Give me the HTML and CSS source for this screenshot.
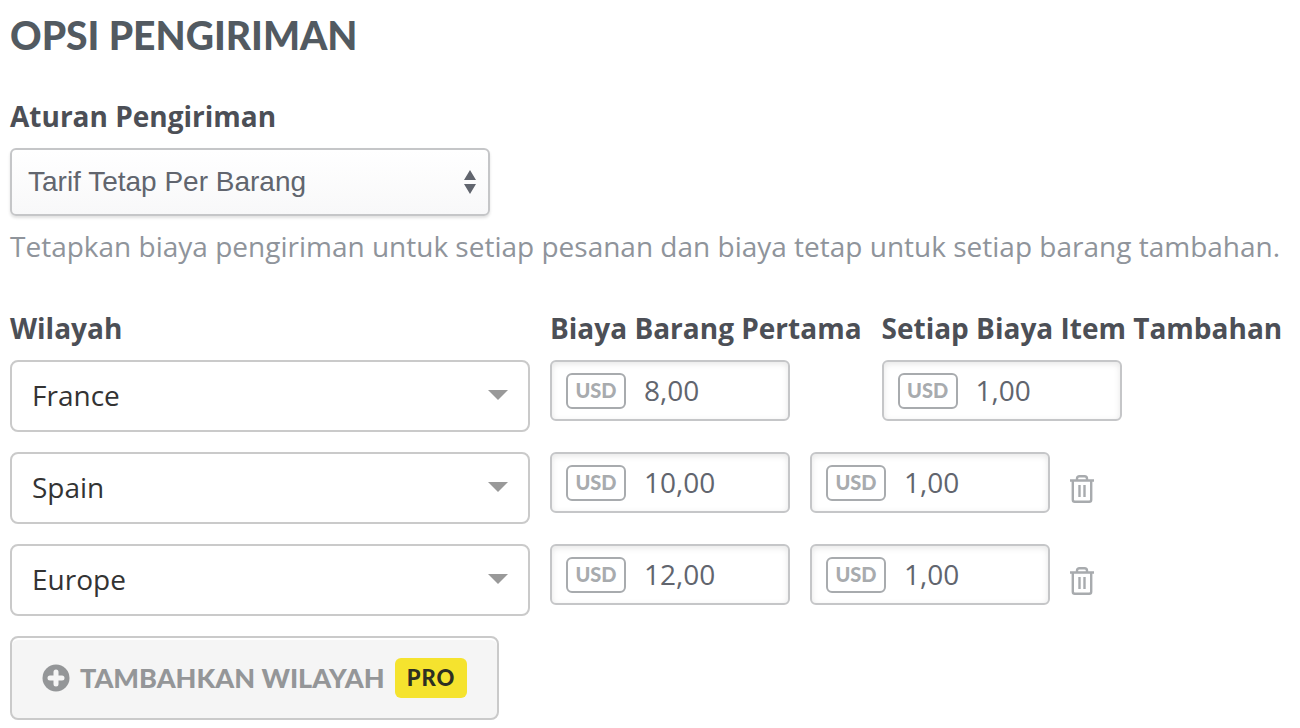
FILE: index.html
```html
<!DOCTYPE html>
<html lang="id">
<head>
	<meta charset="UTF-8">
	<title>Opsi Pengiriman</title>
	<link rel="stylesheet" href="styles.css">
</head>
<body>
<main>
	<h1>OPSI PENGIRIMAN</h1>

	<form class="shipping">
		<div class="rule">
			<label for="rule">Aturan Pengiriman</label>
			<div class="rule-select">
				<select id="rule">
					<option>Tarif Tetap Per Barang</option>
				</select>
				<svg class="updown" viewBox="0 0 12 24" aria-hidden="true"><path d="M6 0l6 10H0zM6 24l6-10H0z"/></svg>
			</div>
			<p class="hint">Tetapkan biaya pengiriman untuk setiap pesanan dan biaya tetap untuk setiap barang tambahan.</p>
		</div>

		<div class="regions">
			<!-- the first region carries the labels and can't be deleted -->
			<div class="region">
				<div class="place">
					<label for="region1">Wilayah</label>
					<div class="region-select">
						<select id="region1"><option>France</option></select>
						<svg class="arrow" viewBox="0 0 20 10" aria-hidden="true"><path d="M0 0h20L10 10z"/></svg>
					</div>
				</div>
				<div class="cost">
					<label for="first1">Biaya Barang Pertama</label>
					<div class="money"><span class="currency">USD</span><input type="text" id="first1" value="8,00"></div>
				</div>
				<div class="cost">
					<label for="extra1">Setiap Biaya Item Tambahan</label>
					<div class="money"><span class="currency">USD</span><input type="text" id="extra1" value="1,00"></div>
				</div>
			</div>

			<div class="region">
				<div class="place">
					<div class="region-select">
						<select aria-label="Wilayah"><option>Spain</option></select>
						<svg class="arrow" viewBox="0 0 20 10" aria-hidden="true"><path d="M0 0h20L10 10z"/></svg>
					</div>
				</div>
				<div class="money"><span class="currency">USD</span><input type="text" aria-label="Biaya Barang Pertama" value="10,00"></div>
				<div class="money"><span class="currency">USD</span><input type="text" aria-label="Setiap Biaya Item Tambahan" value="1,00"></div>
				<button type="button" class="delete" aria-label="Hapus">
					<svg viewBox="0 0 24 28" aria-hidden="true"><path d="M0 5.500h24M7 5V3.500Q7 1.200 9.500 1.200h5Q17 1.200 17 3.500V5M2.800 6v18.800q0 2 2 2h14.400q2 0 2-2V6M9.500 10v12M14.500 10v12"/></svg>
				</button>
			</div>

			<div class="region">
				<div class="place">
					<div class="region-select">
						<select aria-label="Wilayah"><option>Europe</option></select>
						<svg class="arrow" viewBox="0 0 20 10" aria-hidden="true"><path d="M0 0h20L10 10z"/></svg>
					</div>
				</div>
				<div class="money"><span class="currency">USD</span><input type="text" aria-label="Biaya Barang Pertama" value="12,00"></div>
				<div class="money"><span class="currency">USD</span><input type="text" aria-label="Setiap Biaya Item Tambahan" value="1,00"></div>
				<button type="button" class="delete" aria-label="Hapus">
					<svg viewBox="0 0 24 28" aria-hidden="true"><path d="M0 5.500h24M7 5V3.500Q7 1.200 9.500 1.200h5Q17 1.200 17 3.500V5M2.800 6v18.800q0 2 2 2h14.400q2 0 2-2V6M9.500 10v12M14.500 10v12"/></svg>
				</button>
			</div>
		</div>

		<button type="button" class="add">
			<svg class="plus" viewBox="0 0 28 28" aria-hidden="true"><circle cx="14" cy="14" r="13.500"/><path d="M14 8v12M8 14h12"/></svg>
			<span>TAMBAHKAN WILAYAH</span>
			<span class="pro">PRO</span>
		</button>
	</form>
</main>
</body>
</html>
```
FILE: styles.css
```css
* {
	box-sizing: border-box;
}

body {
	margin: 0;
	padding: 10px;
	background: #fff;
	color: #4c4f56;
	font: 28px/40px "Open Sans", sans-serif;
}

h1 {
	margin: 0 0 36px;
	color: #525a61;
	font: 900 39px/50px Lato, sans-serif;
}

label {
	display: block;
	margin-bottom: 12px;
	font-weight: bold;
	line-height: 40px;
	white-space: nowrap;
}

select,
input {
	margin: 0;
	border: 0;
	outline: 0;
	background: none;
	font-family: inherit;
	font-size: 28px;
}

select {
	width: 100%;
	appearance: none;
}

/* Shipping rule */
.rule-select {
	position: relative;
	max-width: 480px;
}

.rule-select select {
	height: 68px;
	padding: 0 50px 2px 16px;
	border: 2px solid #c5c6c8;
	border-radius: 6px;
	background: linear-gradient(#fff, #f8f8f9);
	box-shadow: 0 2px 3px rgba(0, 0, 0, 0.12);
	color: #61656e;
	font-family: "Liberation Sans", Arial, sans-serif;
}

.updown {
	position: absolute;
	top: 22px;
	right: 14px;
	width: 12px;
	height: 24px;
	fill: #61656e;
}

.hint {
	margin: 10px 0 42px;
	color: #8f949b;
}

/* Regions */
.regions {
	display: flex;
	flex-direction: column;
	gap: 20px;
}

.region {
	display: flex;
	align-items: flex-start;
	gap: 20px;
}

.place {
	flex: 0 1 520px;
}

.region-select {
	position: relative;
}

.region-select select {
	height: 72px;
	padding: 0 60px 2px 20px;
	border: 2px solid #cacaca;
	border-radius: 8px;
	color: #333;
}

.arrow {
	position: absolute;
	top: 30px;
	right: 22px;
	width: 20px;
	height: 10px;
	fill: #999;
}

.money {
	display: flex;
	align-items: center;
	gap: 18px;
	width: 240px;
	height: 61px;
	padding: 0 14px;
	border: 2px solid #c5c6c8;
	border-radius: 6px;
	box-shadow: inset 0 2px 6px rgba(0, 0, 0, 0.1);
}

.money input {
	flex: 1;
	min-width: 0;
	padding: 0 0 2px;
	color: #61656e;
}

.currency {
	width: 60px;
	height: 36px;
	border: 2px solid #a8abae;
	border-radius: 6px;
	color: #a8abae;
	font: 900 20px/30px Lato, sans-serif;
	text-align: center;
}

.delete {
	margin: 23px 0 0;
	padding: 0;
	border: 0;
	background: none;
	line-height: 0;
	cursor: pointer;
}

.delete svg {
	width: 24px;
	height: 28px;
	fill: none;
	stroke: #a8abae;
	stroke-width: 2.4;
}

/* Add button */
.add {
	display: flex;
	align-items: center;
	gap: 10px;
	height: 84px;
	margin-top: 20px;
	padding: 0 30px;
	border: 2px solid #cacaca;
	border-radius: 8px;
	background: #f5f5f5;
	box-shadow: inset 0 2px 0 #fff;
	color: #949698;
	font: 900 27px/40px Lato, sans-serif;
	cursor: pointer;
}

.plus {
	width: 28px;
	height: 28px;
	fill: #949698;
	stroke: #f5f5f5;
	stroke-width: 5;
	stroke-linecap: round;
}

.plus circle {
	stroke: none;
}

.pro {
	padding: 0 12px;
	border-radius: 6px;
	background: #f5e32e;
	color: #2d2f22;
	font-size: 22px;
	letter-spacing: 1px;
}
```
